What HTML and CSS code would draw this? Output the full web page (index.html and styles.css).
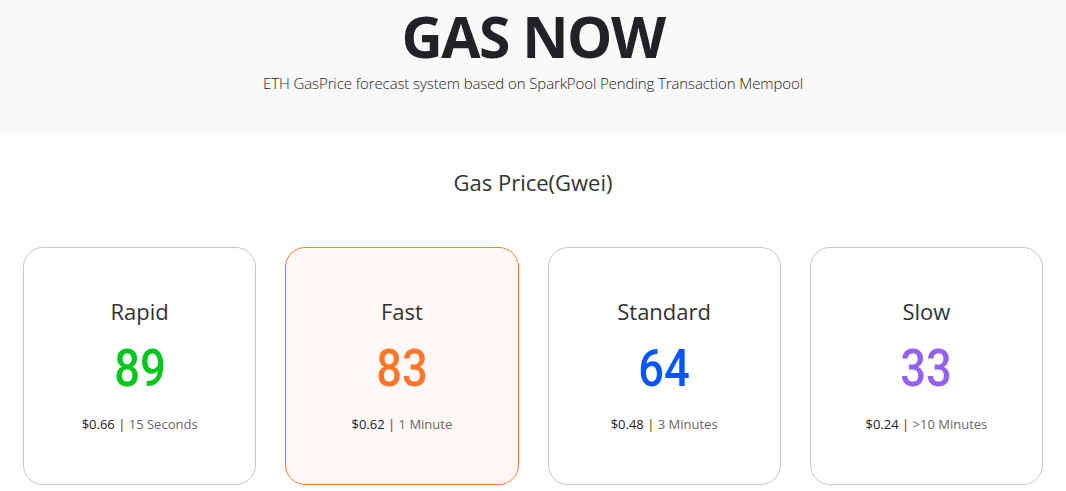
FILE: index.html
```html
<!DOCTYPE html>
<html lang="en">
<head>
<meta charset="utf-8">
<title>GAS NOW</title>
<link rel="stylesheet" href="styles.css">
</head>
<body>
<header class="hero">
  <h1 class="hero-title">GAS NOW</h1>
  <p class="hero-sub">ETH GasPrice forecast system based on SparkPool Pending Transaction Mempool</p>
</header>
<main class="main">
  <h2 class="section-title">Gas Price(Gwei)</h2>
  <div class="cards">
    <div class="card">
      <div class="card-label">Rapid</div>
      <div class="card-value"><span class="num rapid">89</span></div>
      <div class="card-meta"><span class="price">$0.66</span> <span class="sep">|</span> <span class="time">15 Seconds</span></div>
    </div>
    <div class="card active">
      <div class="card-label">Fast</div>
      <div class="card-value"><span class="num fast">83</span></div>
      <div class="card-meta"><span class="price">$0.62</span> <span class="sep">|</span> <span class="time">1 Minute</span></div>
    </div>
    <div class="card">
      <div class="card-label">Standard</div>
      <div class="card-value"><span class="num standard">64</span></div>
      <div class="card-meta"><span class="price">$0.48</span> <span class="sep">|</span> <span class="time">3 Minutes</span></div>
    </div>
    <div class="card">
      <div class="card-label">Slow</div>
      <div class="card-value"><span class="num slow">33</span></div>
      <div class="card-meta"><span class="price">$0.24</span> <span class="sep">|</span> <span class="time">&gt;10 Minutes</span></div>
    </div>
  </div>
</main>
</body>
</html>
```

FILE: styles.css
```css
* { box-sizing: border-box; }
html, body { margin: 0; padding: 0; }
body {
  font-family: "Open Sans", "Noto Sans", "Liberation Sans", sans-serif;
  color: #212529;
  background: #fff;
}
.hero {
  background: #f9f9f9;
  height: 133px;
  display: flex;
  flex-direction: column;
  align-items: center;
}
.hero-title {
  margin: 0;
  padding: 0 6px;
  font-size: 57px;
  font-weight: 700;
  line-height: 72px;
  letter-spacing: -1.5px;
  white-space: nowrap;
  color: #212225;
}
.hero-sub {
  margin: 1px 0 0;
  font-size: 15px;
  line-height: 20px;
  font-weight: 300;
  color: #222;
  letter-spacing: -0.1px;
}
.main {
  padding: 0 23px;
}
.section-title {
  margin: 0;
  padding-top: 34px;
  text-align: center;
  font-size: 22px;
  font-weight: 400;
  line-height: 30px;
  color: #333;
}
.cards {
  margin-top: 50px;
  display: grid;
  grid-template-columns: repeat(4, 1fr);
  gap: 29px;
}
.card {
  height: 238px;
  border: 1px solid #c6c7ca;
  border-radius: 20px;
  background: #fff;
  display: flex;
  flex-direction: column;
  align-items: center;
  padding-top: 48px;
}
.card.active {
  border-color: #ff7a2e;
  background: #fff8f6;
}
.card-label {
  font-size: 22px;
  line-height: 30px;
  color: #333;
}
.card-value {
  margin-top: 20px;
  height: 46px;
  display: flex;
  align-items: center;
}
.num {
  display: inline-block;
  font-family: "Roboto", "Liberation Sans", sans-serif;
  font-weight: 500;
  font-size: 51px;
  line-height: 46px;
  transform: scaleX(0.89);
}
.rapid { color: #00c81a; }
.fast { color: #ff7629; }
.standard { color: #0755ff; }
.slow { color: #9361f0; }
.card-meta {
  margin-top: 23px;
  font-size: 13px;
  line-height: 18px;
  color: #222;
}
.sep { color: #8a5a30; font-weight: 600; }
.time { color: #666; }
```
